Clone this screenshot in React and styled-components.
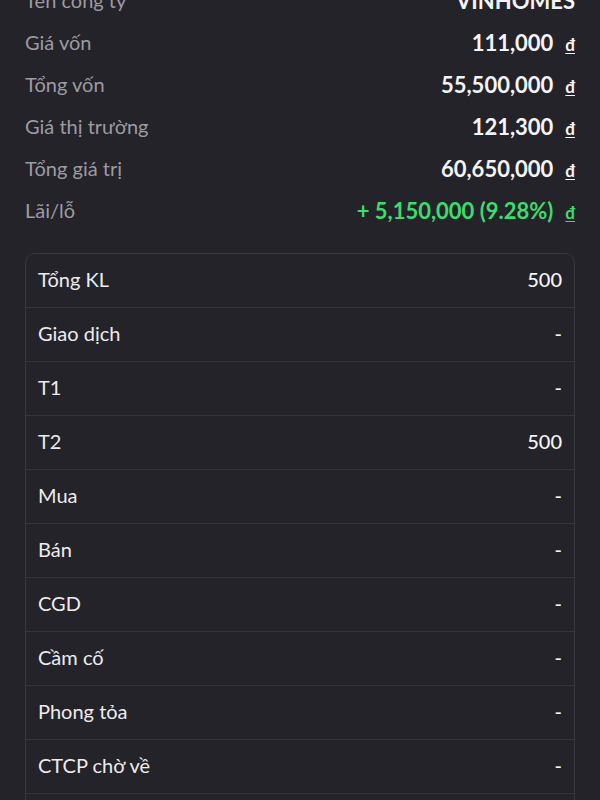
import React from "react";
import styled, { createGlobalStyle } from "styled-components";

const Global = createGlobalStyle`
  html, body { margin: 0; padding: 0; background: #242329; }
  body { font-family: "Lato", "Noto Sans", sans-serif; color: #ececee; overflow: hidden; }
`;

const Page = styled.div`
  width: 600px;
  height: 800px;
  overflow: hidden;
  box-sizing: border-box;
  padding: 0 25px;
  background: #242329;
`;

const SummaryList = styled.div`
  display: flex;
  flex-direction: column;
  margin-top: -21px;
`;

const SummaryRow = styled.div`
  display: flex;
  align-items: center;
  justify-content: space-between;
  height: 42px;
`;

const SummaryLabel = styled.span`
  font-size: 20px;
  color: #9c9ba2;
`;

const SummaryValue = styled.span`
  display: flex;
  align-items: baseline;
  gap: 12px;
  font-size: 22px;
  font-weight: 700;
  color: ${(p) => (p.$tone === "up" ? "#3ddc6e" : "#f4f4f6")};
`;

const Currency = styled.span`
  font-size: 17px;
  font-weight: 700;
  text-decoration: underline;
  text-underline-offset: 2px;
`;

const Card = styled.div`
  margin-top: 22px;
  border: 1px solid #38373e;
  border-radius: 10px;
  overflow: hidden;
`;

const CardRow = styled.div`
  display: flex;
  align-items: center;
  justify-content: space-between;
  box-sizing: border-box;
  height: 54px;
  padding: 0 12px 3px;
  border-bottom: 1px solid #34333a;
`;

const CardLabel = styled.span`
  font-size: 20px;
  color: #ececee;
`;

const CardValue = styled.span`
  font-size: 20px;
  font-weight: 500;
  color: #f4f4f6;
`;

const summary = [
  { label: "Tên công ty", value: "VINHOMES" },
  { label: "Giá vốn", value: "111,000", cur: true },
  { label: "Tổng vốn", value: "55,500,000", cur: true },
  { label: "Giá thị trường", value: "121,300", cur: true },
  { label: "Tổng giá trị", value: "60,650,000", cur: true },
  { label: "Lãi/lỗ", value: "+ 5,150,000 (9.28%)", cur: true, tone: "up" },
];

const details = [
  ["Tổng KL", "500"],
  ["Giao dịch", "-"],
  ["T1", "-"],
  ["T2", "500"],
  ["Mua", "-"],
  ["Bán", "-"],
  ["CGD", "-"],
  ["Cầm cố", "-"],
  ["Phong tỏa", "-"],
  ["CTCP chờ về", "-"],
  ["Quyền chờ về", "-"],
];

export default function App() {
  return (
    <>
      <Global />
      <Page>
        <SummaryList>
          {summary.map((r) => (
            <SummaryRow key={r.label}>
              <SummaryLabel>{r.label}</SummaryLabel>
              <SummaryValue $tone={r.tone}>
                <span>{r.value}</span>
                {r.cur && <Currency>đ</Currency>}
              </SummaryValue>
            </SummaryRow>
          ))}
        </SummaryList>
        <Card>
          {details.map(([l, v]) => (
            <CardRow key={l}>
              <CardLabel>{l}</CardLabel>
              <CardValue>{v}</CardValue>
            </CardRow>
          ))}
        </Card>
      </Page>
    </>
  );
}
